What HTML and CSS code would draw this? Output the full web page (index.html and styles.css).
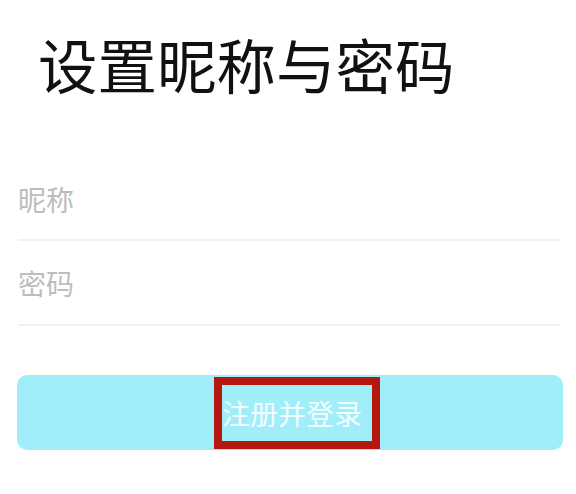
FILE: index.html
```html
<!DOCTYPE html>
<html lang="zh-CN">
<head>
  <meta charset="UTF-8">
  <meta name="viewport" content="width=device-width, initial-scale=1.0">
  <title>设置昵称与密码</title>
  <link rel="stylesheet" href="styles.css">
</head>
<body>
  <h1 class="title">设置昵称与密码</h1>

  <form class="form">
    <div class="field field-first">
      <input type="text" placeholder="昵称">
    </div>
    <div class="field">
      <input type="password" placeholder="密码">
    </div>

    <button type="button" class="submit">
      <span class="mark">注册并登录</span>
    </button>
  </form>
</body>
</html>
```

FILE: styles.css
```css
body {
  font-family: "Noto Sans CJK SC", "Noto Sans", sans-serif;
  margin: 0;
  padding: 0 13px 0 17px;
  background-color: #fff;
  color: #111;
}

.title {
  font-size: 59.5px;
  font-weight: 400;
  line-height: 60px;
  margin: 0;
  padding: 33px 0 0 21px;
}

.form {
  display: flex;
  flex-direction: column;
  margin-top: 80px;
}

.field {
  border-bottom: 2px solid #f0f0f0;
  height: 83px;
  margin: 0 3px 0 1px;
  display: flex;
  align-items: center;
}

.field-first {
  height: 52px;
  padding-bottom: 14px;
}

.field input {
  border: none;
  outline: none;
  width: 100%;
  font-family: inherit;
  font-size: 28px;
  color: #333;
  padding: 0;
  background: transparent;
}

.field input::placeholder {
  color: #bdbdbd;
}

.submit {
  margin-top: 49px;
  height: 75px;
  border: none;
  border-radius: 10px;
  background-color: #a0eef9;
  display: flex;
  align-items: center;
  justify-content: center;
  padding: 0;
}

/* annotation box drawn over the button label */
.mark {
  font-family: inherit;
  font-size: 28px;
  color: #f4fdff;
  border: 8px solid #b5170e;
  height: 56px;
  width: 150px;
  margin-left: 14px;
  display: flex;
  align-items: center;
}
```
